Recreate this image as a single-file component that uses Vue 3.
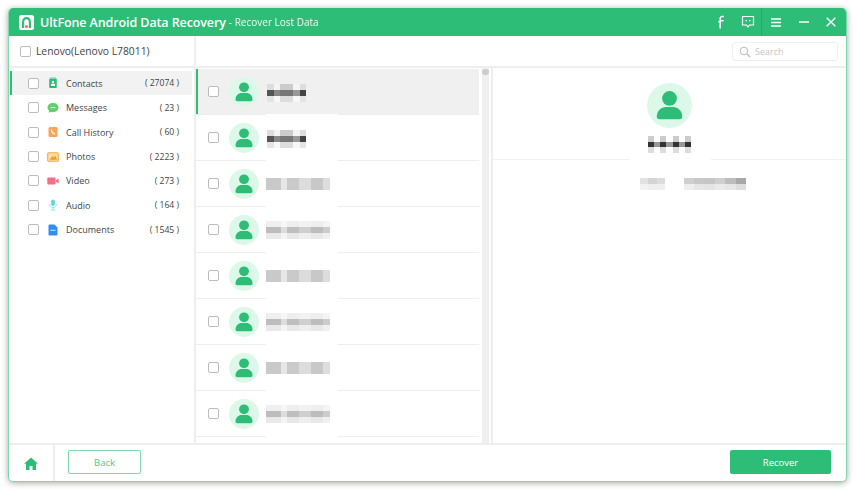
<script setup>
const cats = [
  { key: 'contacts', label: 'Contacts', count: '( 27074 )', active: true },
  { key: 'messages', label: 'Messages', count: '( 23 )' },
  { key: 'calls', label: 'Call History', count: '( 60 )' },
  { key: 'photos', label: 'Photos', count: '( 2223 )' },
  { key: 'video', label: 'Video', count: '( 273 )' },
  { key: 'audio', label: 'Audio', count: '( 164 )' },
  { key: 'docs', label: 'Documents', count: '( 1545 )' }
]
const dark = [
  ['#ddd', '#f4f4f4', '#ccc', '#ccc', '#f4f4f4', '#ddd'],
  ['#555', '#888', '#777', '#777', '#999', '#444'],
  ['#e4e4e4', '#f8f8f8', '#ddd', '#ddd', '#f8f8f8', '#e4e4e4']
]
const band = [['#c9c9c9', '#e6e6e6', '#cacaca', '#dcdcdc', '#c8c8c8', '#dddddd']]
const stripe = [
  ['#efefef', '#f6f6f6', '#eeeeee', '#f2f2f2', '#eeeeee', '#f4f4f4'],
  ['#bdbdbd', '#dddddd', '#bfbfbf', '#cfcfcf', '#bdbdbd', '#cccccc'],
  ['#e9e9e9', '#f4f4f4', '#e8e8e8', '#eeeeee', '#e8e8e8', '#f0f0f0']
]
const rows = [
  { m: dark, active: true }, { m: dark },
  { m: band, kind: 'band' }, { m: stripe, kind: 'stripe' },
  { m: band, kind: 'band' }, { m: stripe, kind: 'stripe' },
  { m: band, kind: 'band' }, { m: stripe, kind: 'stripe' }
]
const title = [
  ['#ccc', '#fff', '#ccc', '#fff', '#ccc', '#fff', '#ccc'],
  ['#333', '#999', '#333', '#999', '#333', '#999', '#333'],
  ['#ddd', '#fff', '#ddd', '#fff', '#ddd', '#fff', '#ddd']
]
const infoA = [['#e2e2e2', '#d4d4d4', '#dcdcdc'], ['#f2f2f2', '#eee', '#efefef']]
const infoB = [['#cfcfcf', '#c8c8c8', '#c6c6c6', '#cfcfcf', '#bdbdbd', '#a8a8a8'], ['#eee', '#e6e6e6', '#e4e4e4', '#eaeaea', '#e6e6e6', '#ddd']]
</script>

<template>
  <div class="page">
    <div class="window">
      <header class="titlebar">
        <div class="logo">
          <svg viewBox="0 0 15 15" width="15" height="15">
            <rect width="15" height="15" rx="2.500" fill="#fff" />
            <path d="M3 13V7.200C3 4 4.700 2 7.500 2S12 4 12 7.200V13H9.800V7.400C9.800 5.300 9 4.200 7.500 4.200S5.200 5.300 5.200 7.400V13z" fill="#2ebd76" />
            <circle cx="7.500" cy="11.500" r="1.500" fill="#ee6f74" />
          </svg>
        </div>
        <span class="app-name">UltFone Android Data Recovery</span>
        <span class="app-sub">- Recover Lost Data</span>
        <div class="tools">
          <svg class="tb f" viewBox="0 0 8 14" width="8" height="14"><path d="M3.200 13.500V6.800H1.200M3.200 6.800V3.700C3.200 2.200 4 1.500 5.200 1.500H6.800M3.200 5.800H6.600" fill="none" stroke="#fff" stroke-width="1.500" /></svg>
          <svg class="tb chat" viewBox="0 0 14 14" width="14" height="14"><path d="M1.500 1.500h11v8.500H8.500L7 12 5.500 10H1.500z" fill="none" stroke="#fff" stroke-width="1.200" /><rect x="4.600" y="5" width="1.300" height="1.300" fill="#fff" /><rect x="8.100" y="5" width="1.300" height="1.300" fill="#fff" /></svg>
          <div class="sep"></div>
          <svg class="tb menu" viewBox="0 0 10 9" width="10" height="9"><path d="M0 1h10M0 4.500h10M0 8h10" stroke="#fff" stroke-width="1.400" /></svg>
          <svg class="tb min" viewBox="0 0 10 2" width="10" height="2"><path d="M0 1h10" stroke="#fff" stroke-width="1.500" /></svg>
          <svg class="tb close" viewBox="0 0 10 10" width="10" height="10"><path d="M.7.7l8.600 8.600M9.300.7.700 9.300" stroke="#fff" stroke-width="1.400" /></svg>
        </div>
      </header>

      <div class="main">
        <aside class="side">
          <div class="device">
            <span class="check dev"></span>
            <span>Lenovo(Lenovo L78011)</span>
          </div>
          <ul class="cats">
            <li v-for="c in cats" :key="c.key" class="cat" :class="{ on: c.active }">
              <span class="check"></span>
              <svg class="cat-icon" viewBox="0 0 12 12" width="12" height="12">
                <template v-if="c.key === 'contacts'">
                  <rect x="2.200" y="1.500" width="7.600" height="9.500" rx="1" fill="#2ebd76" />
                  <rect x="3" y=".4" width="6" height="1.200" fill="#7cd6a8" />
                  <circle cx="6" cy="5" r="1.200" fill="#fff" />
                  <rect x="4" y="6.800" width="4" height="2.200" rx=".6" fill="#fff" />
                </template>
                <template v-else-if="c.key === 'messages'">
                  <path d="M6 1c3.100 0 5.500 2 5.500 4.600S9.100 10.200 6 10.200c-.8 0-1.500-.1-2.200-.4L1.800 11l.3-2.300C1 7.800.5 6.800.5 5.600.5 3 2.900 1 6 1z" fill="#5fd06d" />
                  <rect x="3.500" y="5" width="5" height="1.100" fill="#d6f5dc" />
                </template>
                <template v-else-if="c.key === 'calls'">
                  <rect x="1.500" y="1" width="9" height="10" rx="1.500" fill="#f9a659" />
                  <path d="M4.500 3.500c0 2.500 1.500 4 3.500 4.500" fill="none" stroke="#fff" stroke-width="1.200" />
                </template>
                <template v-else-if="c.key === 'photos'">
                  <rect x=".7" y="1.700" width="10.600" height="8.600" rx="1" fill="#fde0a8" stroke="#f7ab3d" stroke-width="1.100" />
                  <path d="M2.500 8.800 5.500 5l1.500 1.500L8.500 4.500l1.500 4.300z" fill="#f59a2f" />
                </template>
                <template v-else-if="c.key === 'video'">
                  <rect x=".3" y="2.500" width="8.200" height="7" rx="1" fill="#f86d86" />
                  <path d="M9 5.200 11.700 3.500v5L9 6.800z" fill="#f86d86" />
                </template>
                <template v-else-if="c.key === 'audio'">
                  <rect x="4.200" y=".5" width="3.600" height="6.500" rx="1.800" fill="#5ed5e3" />
                  <path d="M2.700 5c0 2.500 1.500 3.500 3.300 3.500S9.300 7.500 9.300 5M6 8.500v2M3.500 11h5" fill="none" stroke="#8ee3ec" stroke-width="1" />
                </template>
                <template v-else>
                  <path d="M1.500 1.500A1 1 0 0 1 2.500.5h5L10.500 3.500V10.500a1 1 0 0 1-1 1h-7a1 1 0 0 1-1-1z" fill="#2f8ff0" />
                  <rect x="3.500" y="5.800" width="5" height="1" fill="#d4e8fc" />
                </template>
              </svg>
              <span class="cat-label">{{ c.label }}</span>
              <span class="cat-count">{{ c.count }}</span>
            </li>
          </ul>
        </aside>

        <section class="content">
          <div class="search-row">
            <div class="search">
              <svg viewBox="0 0 12 12" width="12" height="12"><circle cx="5" cy="5" r="3.800" fill="none" stroke="#bbb" stroke-width="1" /><path d="M8 8l3 3" stroke="#bbb" stroke-width="1.200" /></svg>
              <span>Search</span>
            </div>
          </div>
          <div class="panes">
            <div class="list">
              <div class="rows">
                <template v-for="(r, i) in rows" :key="i">
                  <div class="row" :class="{ on: r.active }">
                    <span class="check"></span>
                    <div class="avatar">
                      <svg viewBox="0 0 30 30" width="30" height="30"><circle cx="15" cy="10.300" r="4.900" fill="#2ebd76" /><path d="M6.500 22.500c0-4 3-6.500 6-6.500h5c3 0 6 2.500 6 6.500 0 1-.7 1.700-1.700 1.700H8.200c-1 0-1.700-.7-1.700-1.700z" fill="#2ebd76" /></svg>
                    </div>
                    <div class="mosaic" :class="r.kind">
                      <div v-for="(line, k) in r.m" :key="k" class="m-line">
                        <span v-for="(col, n) in line" :key="n" :style="{ background: col }"></span>
                      </div>
                    </div>
                  </div>
                  <div class="rule"></div>
                </template>
              </div>
              <div class="scrollbar"><div class="thumb"></div></div>
            </div>
            <div class="detail">
              <div class="avatar big">
                <svg viewBox="0 0 30 30" width="45" height="45"><circle cx="15" cy="10.300" r="4.900" fill="#2ebd76" /><path d="M6.500 22.500c0-4 3-6.500 6-6.500h5c3 0 6 2.500 6 6.500 0 1-.7 1.700-1.700 1.700H8.200c-1 0-1.700-.7-1.700-1.700z" fill="#2ebd76" /></svg>
              </div>
              <div class="mosaic title-m">
                <div v-for="(line, k) in title" :key="k" class="m-line">
                  <span v-for="(col, n) in line" :key="n" :style="{ background: col }"></span>
                </div>
              </div>
              <div class="rule detail-rule"></div>
              <div class="info">
                <div class="mosaic info-a">
                  <div v-for="(line, k) in infoA" :key="k" class="m-line">
                    <span v-for="(col, n) in line" :key="n" :style="{ background: col }"></span>
                  </div>
                </div>
                <div class="mosaic info-b">
                  <div v-for="(line, k) in infoB" :key="k" class="m-line">
                    <span v-for="(col, n) in line" :key="n" :style="{ background: col }"></span>
                  </div>
                </div>
              </div>
            </div>
          </div>
        </section>
      </div>

      <footer class="footer">
        <div class="home">
          <svg viewBox="0 0 14 13" width="14" height="13"><path d="M7 .5 14 6.800h-2V13H8.500V9h-3v4H2V6.800H0z" fill="#2ebd76" /></svg>
        </div>
        <div class="actions">
          <button class="btn back">Back</button>
          <button class="btn recover">Recover</button>
        </div>
      </footer>
    </div>
  </div>
</template>

<style>
html, body { margin: 0; background: #fff; }
</style>

<style scoped>
* { box-sizing: border-box; }
.page {
  width: 855px;
  height: 489px;
  padding: 8px 8px 7px 8px;
  font-family: "Open Sans", "Noto Sans", sans-serif;
  color: #444;
  overflow: hidden;
}
.window {
  width: 839px;
  height: 474px;
  display: flex;
  flex-direction: column;
  border-radius: 5px;
  border: 1px solid #7ed8ab;
  border-top: 0;
  box-shadow: 0 1px 6px rgba(0, 0, 0, .35);
  background: #fff;
  overflow: hidden;
}
.titlebar {
  height: 28px;
  flex: none;
  background: #2ebd76;
  color: #fff;
  display: flex;
  align-items: center;
  padding-left: 10px;
}
.logo { width: 15px; height: 15px; margin-right: 6px; display: flex; }
.app-name { font-size: 12.500px; font-weight: 600; letter-spacing: -.1px; }
.app-sub { font-size: 10px; margin-left: 3px; opacity: .92; }
.tools { margin-left: auto; height: 100%; display: flex; align-items: center; }
.tb { display: block; flex: none; }
.f { margin-right: 16px; }
.chat { margin-right: 6px; }
.sep { width: 1px; height: 100%; background: #28a868; margin-right: 9px; }
.menu { margin-right: 18px; }
.min { margin-right: 17px; }
.close { margin-right: 10px; }

.main { flex: 1; min-height: 0; display: flex; }
.side { width: 187px; flex: none; border-right: 2px solid #eee; }
.device {
  height: 32px;
  border-bottom: 2px solid #eee;
  display: flex;
  align-items: center;
  font-size: 10.300px;
  padding-left: 11px;
  gap: 5px;
}
.check {
  width: 11px;
  height: 11px;
  flex: none;
  border: 1px solid #bcbcbc;
  border-radius: 2px;
  background: #fff;
}
.cats { list-style: none; margin: 3px 0 0; padding: 0 2px 0 1px; }
.cat {
  height: 24.450px;
  display: flex;
  align-items: center;
  padding-left: 16px;
  border-left: 2px solid transparent;
  font-size: 9px;
}
.cat.on { background: #f2f2f2; border-left-color: #2ebd76; }
.cat-icon { margin-left: 8px; flex: none; }
.cat-label { margin-left: 7px; }
.cat-count { margin-left: auto; margin-right: 13px; font-size: 8.600px; }

.content { flex: 1; min-width: 0; display: flex; flex-direction: column; }
.search-row {
  height: 32px;
  flex: none;
  border-bottom: 2px solid #eee;
  display: flex;
  justify-content: flex-end;
  align-items: flex-start;
  padding: 6px 8px 0 0;
}
.search {
  width: 106px;
  height: 19px;
  border: 1px solid #eee;
  border-radius: 3px;
  display: flex;
  align-items: center;
  padding-left: 6px;
  gap: 4px;
  font-size: 9px;
  color: #c4c4c4;
}
.panes { flex: 1; min-height: 0; display: flex; }
.list { width: 297px; flex: none; display: flex; border-right: 2px solid #eee; }
.rows { width: 283px; flex: none; overflow: hidden; padding-top: 1px; }
.row {
  height: 45px;
  display: flex;
  align-items: center;
  padding-left: 10px;
  border-left: 2px solid transparent;
}
.row.on { background: #f0f0f0; border-left-color: #2ebd76; }
.rule {
  height: 1px;
  background: linear-gradient(to right, #eee 70px, #fff 70px, #fff 142px, #eee 142px);
}
.avatar {
  width: 30px;
  height: 30px;
  flex: none;
  border-radius: 50%;
  background: #dcf8e9;
  margin-left: 10px;
}
.avatar svg { display: block; }
.mosaic { filter: blur(.6px); }
.rows .mosaic { margin-left: 8px; width: 39px; margin-top: 2px; }
.rows .band, .rows .stripe { width: 64px; margin-left: 7px; margin-top: 0; }
.m-line { display: flex; height: 6px; }
.m-line span { flex: 1; }
.rows .band .m-line { height: 12px; }
.band .m-line span:nth-child(1), .stripe .m-line span:nth-child(1) { flex: 15; }
.band .m-line span:nth-child(2), .stripe .m-line span:nth-child(2) { flex: 6; }
.band .m-line span:nth-child(3), .stripe .m-line span:nth-child(3) { flex: 12; }
.band .m-line span:nth-child(4), .stripe .m-line span:nth-child(4) { flex: 12; }
.band .m-line span:nth-child(5), .stripe .m-line span:nth-child(5) { flex: 12; }
.band .m-line span:nth-child(6), .stripe .m-line span:nth-child(6) { flex: 7; }
.scrollbar {
  width: 7px;
  margin-left: 3px;
  background: #efefef;
  flex: none;
}
.thumb { height: 6px; border-radius: 3px; background: #ccc; margin-top: 1px; }
.detail { flex: 1; min-width: 0; display: flex; flex-direction: column; align-items: center; }
.big { width: 45px; height: 45px; margin: 15px 0 0; }
.title-m { width: 44px; margin-top: 8px; }
.title-m .m-line { height: 5.500px; }
.detail-rule {
  align-self: stretch;
  margin-top: 6px;
  background: linear-gradient(to right, #f2f2f2 137px, #fff 137px, #fff 218px, #f2f2f2 218px);
}
.info { display: flex; gap: 19px; margin-top: 18px; margin-left: 47px; }
.info-a { width: 25px; }
.info-b { width: 62px; }
.info .m-line { height: 6px; }

.footer { height: 38px; flex: none; border-top: 2px solid #eee; display: flex; }
.home {
  width: 46px;
  flex: none;
  border-right: 2px solid #eee;
  display: flex;
  align-items: center;
  justify-content: center;
  padding-right: 1px;
}
.actions {
  flex: 1;
  display: flex;
  align-items: center;
  justify-content: space-between;
  padding: 0 15px 2px 13px;
}
.btn {
  height: 24px;
  border-radius: 2px;
  font-family: inherit;
  font-size: 9.500px;
  padding: 0;
}
.back { width: 73px; background: #fff; border: 1px solid #7ed8ab; color: #4cc88a; }
.recover { width: 101px; background: #2ebd76; border: 0; color: #fff; }
</style>
